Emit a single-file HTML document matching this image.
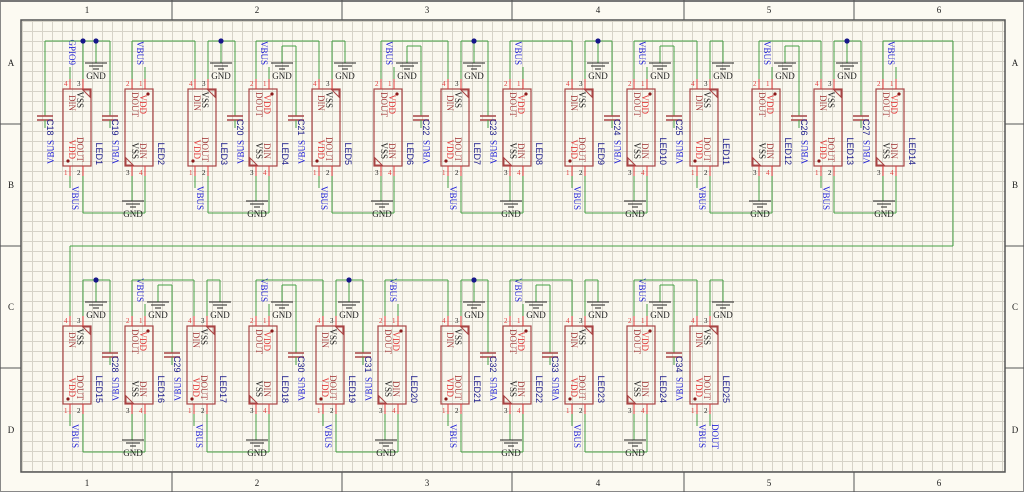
<!DOCTYPE html>
<html><head><meta charset="utf-8"><style>
html,body{margin:0;padding:0;background:#fcfaf2;width:1024px;height:492px;overflow:hidden}
svg{display:block}
</style></head><body>
<svg id="s" width="1024" height="492" xmlns="http://www.w3.org/2000/svg"></svg>
<script>
var o='';
var G='#45a045',R='#e23b3b',BR='#a84444',BL='#2424d8',NV='#1c1c8c',K='#222';
function ln(a,b,c,d,col,w){o+='<line x1="'+a+'" y1="'+b+'" x2="'+c+'" y2="'+d+'" stroke="'+col+'" stroke-width="'+(w||1)+'"/>';}
function tx(x,y,t,col,rot,sz,fam,anc){o+='<text x="'+x+'" y="'+y+'" fill="'+col+'" font-size="'+(sz||9)+'" font-family="'+(fam||'Liberation Serif')+', serif"'+(anc?' text-anchor="'+anc+'"':'')+(rot?' transform="rotate('+rot+' '+x+' '+y+')"':'')+'>'+t+'</text>';}
function tu(x,y,t,col){tx(x-7,y,t,col,90,9,null,'end');}
function td(x,y,t,col){tx(x+7,y,t,col,-90,9,null,'end');}
function dot(x,y){o+='<circle cx="'+x+'" cy="'+y+'" r="2.6" fill="#16168a"/>';}
function gnd(x,y){ln(x-11,y,x+11,y,K);ln(x-7,y+3,x+7,y+3,K);ln(x-3,y+6,x+3,y+6,K);tx(x,y+16,'GND',K,0,9,null,'middle');}
function cap(x,y,lab){ln(x-8,y,x+8,y,BR,1.5);ln(x-8,y+4,x+8,y+4,BR,1.5);ln(x,y+4,x,y+12,G);tx(x+2,y+3,lab,NV,90,9,'Liberation Sans');td(x+2,y+24,'VBUS',BL);}
o+='<defs><pattern id="g" width="10" height="10" patternUnits="userSpaceOnUse" x="22" y="21"><path d="M0.5 0V10M0 0.5H10" stroke="#d6d3c8" stroke-width="1" fill="none"/></pattern></defs>';
o+='<rect x="21" y="20" width="984" height="452" fill="#faf8ef"/><rect x="21" y="20" width="984" height="452" fill="url(#g)"/>';
o+='<rect x="21" y="20" width="984" height="452" fill="none" stroke="#555" stroke-width="1.5"/>';
o+='<rect x="0.5" y="0.5" width="1023" height="491" fill="none" stroke="#888" stroke-width="1"/>';
ln(0,1,1024,1,'#777',2);
[172,342,512,684,854].forEach(function(x){ln(x,0,x,20,'#555');ln(x,472,x,492,'#555');});
[124,246,368].forEach(function(y){ln(0,y,21,y,'#555');ln(1005,y,1024,y,'#555');});
var nums=['1','2','3','4','5','6'],cx=[87,257,427,598,769,939];
for(var i=0;i<6;i++){tx(cx[i],13,nums[i],K,0,9,null,'middle');tx(cx[i],486,nums[i],K,0,9,null,'middle');}
var let_=['A','B','C','D'],cy=[66,188,310,433];
for(var i=0;i<4;i++){tx(11,cy[i],let_[i],K,0,9,null,'middle');tx(1015,cy[i],let_[i],K,0,9,null,'middle');}
var rows=[{T:89,B:166,yT:41,yB:213},{T:326,B:404,yT:280,yB:452}];
var leds=[
[1,63,0,'C19','LED1'],[2,125,0,null,'LED2'],[3,188,0,'C20','LED3'],[4,249,0,'C21','LED4'],[5,312,0,null,'LED5'],[6,374,0,'C22','LED6'],[7,441,0,'C23','LED7'],[8,503,0,null,'LED8'],[9,565,0,'C24','LED9'],[10,627,0,'C25','LED10'],[11,690,0,null,'LED11'],[12,752,0,'C26','LED12'],[13,814,0,'C27','LED13'],[14,876,0,null,'LED14'],
[15,63,1,'C28','LED15'],[16,125,1,'C29','LED16'],[17,187,1,null,'LED17'],[18,249,1,'C30','LED18'],[19,316,1,'C31','LED19'],[20,378,1,null,'LED20'],[21,441,1,'C32','LED21'],[22,503,1,'C33','LED22'],[23,565,1,null,'LED23'],[24,627,1,'C34','LED24'],[25,690,1,null,'LED25']];
var noG={2:1,8:1,14:1,20:1};
leds.forEach(function(L,idx){
 var n=L[0],x=L[1],r=rows[L[2]],c=L[3],T=r.T,B=r.B,yT=r.yT,yB=r.yB;
 var nx=(idx+1<leds.length&&leds[idx+1][2]==L[2])?leds[idx+1][1]:null;
 var A=(n%2==1);
 var p1=x+7,p2=x+20;
 o+='<rect x="'+x+'" y="'+T+'" width="28" height="'+(B-T)+'" fill="none" stroke="'+BR+'" stroke-width="1.2"/>';
 ln(p1,T-10,p1,T,R);ln(p2,T-10,p2,T,R);ln(p1,B,p1,B+10,R);ln(p2,B,p2,B+10,R);
 tx(x+33,B-1,L[4],NV,90,9,'Liberation Sans','end');
 if(A){
  tx(x+1,T-3,'4',R,0,7);tx(x+14,T-3,'3',K,0,7);tx(x+1,B+9,'1',R,0,7);tx(x+14,B+9,'2',K,0,7);
  tu(x+13,T+22,'DIN',BR);tu(x+21,T+19,'VSS',K);
  tu(x+13,B-7,'VDD',R);tu(x+21,B-4,'DOUT',BR);
  o+='<path d="M'+(x+27)+' '+(T+1)+'l-7 0l7 7z" fill="none" stroke="'+BR+'"/>';
  o+='<circle cx="'+(x+5)+'" cy="'+(B-5)+'" r="1.6" fill="#8a1a1a"/>';
  ln(p2,T-10,p2,yT,G);
  ln(p2,yT,c?x+47:x+33,yT,G);
  ln(x+33,yT,x+33,yT+22,G);gnd(x+33,yT+22);
  if(c){dot(x+33,yT);ln(x+47,yT,x+47,T+27,G);cap(x+47,T+27,c);}
  ln(p1,B+10,p1,B+22,G);tx(p1+2,B+20,'VBUS',BL,90);
  if(n==1){ln(p1,T-10,p1,T-22,G);tu(p1+6,T-24,'GPIO9',BL);
   ln(45,yT,p2,yT,G);dot(p2,yT);ln(45,yT,45,T+27,G);cap(45,T+27,'C18');}
  else if(n==15){ln(p1,T-10,p1,246,G);}
  else ln(p1,T-10,p1,yT,G);
  if(nx!==null){ln(p2,B+10,p2,yB,G);ln(p2,yB,nx+20,yB,G);}
  else {ln(p2,B+10,p2,B+22,G);tx(p2+2,B+20,'DOUT',BL,90);}
 } else {
  tx(x+1,T-3,'2',R,0,7);tx(x+14,T-3,'1',R,0,7);tx(x+1,B+9,'3',K,0,7);tx(x+14,B+9,'4',R,0,7);
  tu(x+14,T+28,'DOUT',BR);tu(x+22,T+25,'VDD',R);
  tu(x+14,B-7,'VSS',K);tu(x+22,B-7,'DIN',BR);
  o+='<path d="M'+(x+1)+' '+(B-1)+'l7 0l-7 -7z" fill="none" stroke="'+BR+'"/>';
  o+='<circle cx="'+(x+23)+'" cy="'+(T+5)+'" r="1.6" fill="#8a1a1a"/>';
  ln(p2,T-10,p2,T-22,G);tu(p2-1,T-24,'VBUS',BL);
  ln(p1,T-10,p1,yT,G);
  if(nx!==null)ln(p1,yT,nx+7,yT,G);
  else {ln(p1,yT,953,yT,G);ln(953,yT,953,246,G);ln(953,246,70,246,G);}
  if(!noG[n]){
   ln(x+33,yT+5,x+33,yT+22,G);gnd(x+33,yT+22);
   if(c){ln(x+33,yT+5,x+47,yT+5,G);ln(x+47,yT+5,x+47,T+27,G);cap(x+47,T+27,c);}
  }
  ln(p1,B+10,p1,yB-12,G);gnd(p1+1,yB-12);
  ln(p2,B+10,p2,yB,G);
 }
});
document.getElementById('s').innerHTML=o;
</script>
</body></html>
